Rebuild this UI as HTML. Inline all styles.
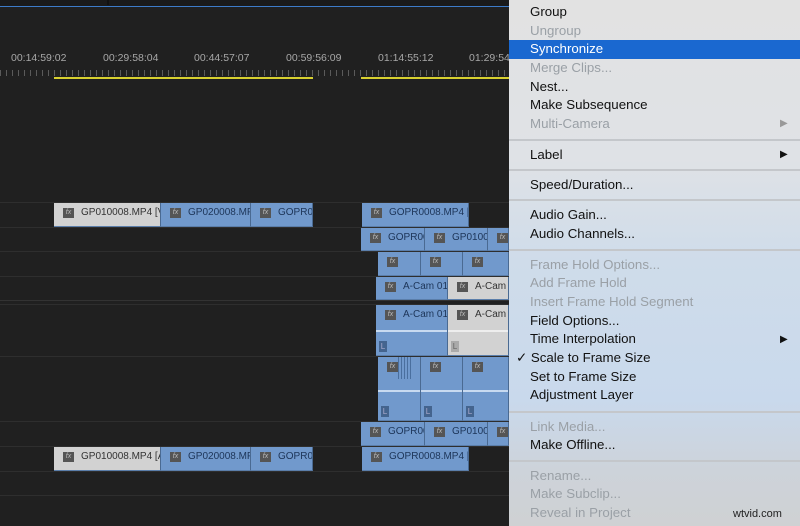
<!DOCTYPE html>
<html><head><meta charset="utf-8"><style>
*{margin:0;padding:0;box-sizing:border-box}
body{width:800px;height:526px;overflow:hidden;background:#202020;position:relative;font-family:"Liberation Sans",sans-serif}
.a{position:absolute}
.ln{position:absolute;left:0;width:509px;height:1px;background:#2e2e2e}
.c{position:absolute;background:#7199cc;border-right:1px solid #4a6a92;overflow:hidden;white-space:nowrap;font-size:10px;color:#1d3558;border-bottom:1px solid #5b7eaa}
.c.g{background:#d2d2d2;color:#333}
.fx{position:absolute;left:9px;top:5px;width:11px;height:10px;background:#555;color:#bbb;font-size:7px;font-style:italic;line-height:10px;text-align:center}
.c span{position:absolute;left:27px;top:4px}
.L{position:absolute;left:3px;bottom:3px;width:8px;height:11px;background:#44648e;color:#aac;font-size:8px;line-height:11px;text-align:center}
.hl{position:absolute;left:0;right:0;height:2px;background:#c8daf0}
.tc{position:absolute;top:52px;font-size:10.5px;color:#a8a8a8}
.menu{position:absolute;left:509px;top:0;width:291px;height:526px;background:linear-gradient(#e2e2e2 0,#dfe2e6 160px,#cfdcea 260px,#c9d9ec 400px,#cdd3da 470px,#cfd1d3 526px)}
.mi{position:absolute;left:21px;font-size:13.3px;color:#111;line-height:18px}
.d{color:#9aa0a6}
.sep{position:absolute;left:0;right:0;height:2px;background:#c4c7cb}
.arr{position:absolute;left:271px;font-size:10px;color:#111}
</style></head><body>
<div class="a" style="left:0;top:0;width:509px;height:6px;background:#1a1a1a"></div>
<div class="a" style="left:107px;top:0;width:2px;height:5px;background:#111"></div>
<div class="a" style="left:0;top:6px;width:509px;height:1px;background:#3d7bc8"></div>
<div class="tc" style="left:11px">00:14:59:02</div>
<div class="tc" style="left:103px">00:29:58:04</div>
<div class="tc" style="left:194px">00:44:57:07</div>
<div class="tc" style="left:286px">00:59:56:09</div>
<div class="tc" style="left:378px">01:14:55:12</div>
<div class="tc" style="left:469px">01:29:54</div>
<div class="a" style="left:0;top:70px;width:509px;height:6px;background:repeating-linear-gradient(90deg,#5a5a5a 0 1px,transparent 1px 6px)"></div>
<div class="a" style="left:54px;top:77px;width:259px;height:2px;background:#d8d030"></div>
<div class="a" style="left:361px;top:77px;width:148px;height:2px;background:#d8d030"></div>

<div class="ln" style="top:202px"></div><div class="ln" style="top:227px"></div>
<div class="ln" style="top:251px"></div><div class="ln" style="top:276px"></div>
<div class="ln" style="top:300px;background:#333"></div><div class="ln" style="top:304px"></div>
<div class="ln" style="top:356px"></div><div class="ln" style="top:421px"></div>
<div class="ln" style="top:446px"></div><div class="ln" style="top:471px"></div>
<div class="ln" style="top:495px"></div>

<div class="c g" style="left:54px;top:203px;width:107px;height:24px"><i class="fx">fx</i><span>GP010008.MP4 [V]</span></div>
<div class="c" style="left:161px;top:203px;width:90px;height:24px"><i class="fx">fx</i><span>GP020008.MP4</span></div>
<div class="c" style="left:251px;top:203px;width:62px;height:24px"><i class="fx">fx</i><span>GOPR00</span></div>
<div class="c" style="left:362px;top:203px;width:107px;height:24px"><i class="fx">fx</i><span>GOPR0008.MP4 [V]</span></div>
<div class="c" style="left:361px;top:228px;width:64px;height:23px"><i class="fx">fx</i><span>GOPR00</span></div>
<div class="c" style="left:425px;top:228px;width:63px;height:23px"><i class="fx">fx</i><span>GP0100</span></div>
<div class="c" style="left:488px;top:228px;width:21px;height:23px"><i class="fx">fx</i></div>
<div class="c" style="left:378px;top:252px;width:43px;height:24px"><i class="fx">fx</i></div>
<div class="c" style="left:421px;top:252px;width:42px;height:24px"><i class="fx">fx</i></div>
<div class="c" style="left:463px;top:252px;width:46px;height:24px"><i class="fx">fx</i></div>
<div class="c" style="left:376px;top:277px;width:72px;height:23px"><i class="fx">fx</i><span>A-Cam 01</span></div>
<div class="c g" style="left:448px;top:277px;width:61px;height:23px"><i class="fx">fx</i><span>A-Cam 0</span></div>
<div class="c" style="left:376px;top:305px;width:72px;height:51px"><i class="fx">fx</i><span>A-Cam 01</span><div class="hl" style="top:25px"></div><div class="L">L</div></div>
<div class="c g" style="left:448px;top:305px;width:61px;height:51px"><i class="fx">fx</i><span>A-Cam 0</span><div class="hl" style="top:25px;background:#eee"></div><div class="L" style="background:#aaa;color:#666">L</div></div>
<div class="c" style="left:378px;top:357px;width:43px;height:64px"><i class="fx">fx</i><div class="a" style="left:20px;top:0;width:14px;height:22px;background:repeating-linear-gradient(90deg,#4a6f9e 0 1px,transparent 1px 3px)"></div><div class="hl" style="top:33px"></div><div class="L">L</div></div>
<div class="c" style="left:421px;top:357px;width:42px;height:64px"><i class="fx">fx</i><div class="hl" style="top:33px"></div><div class="L">L</div></div>
<div class="c" style="left:463px;top:357px;width:46px;height:64px"><i class="fx">fx</i><div class="hl" style="top:33px"></div><div class="L">L</div></div>
<div class="c" style="left:361px;top:422px;width:64px;height:24px"><i class="fx">fx</i><span>GOPR00</span></div>
<div class="c" style="left:425px;top:422px;width:63px;height:24px"><i class="fx">fx</i><span>GP0100</span></div>
<div class="c" style="left:488px;top:422px;width:21px;height:24px"><i class="fx">fx</i></div>
<div class="c g" style="left:54px;top:447px;width:107px;height:24px"><i class="fx">fx</i><span>GP010008.MP4 [A]</span></div>
<div class="c" style="left:161px;top:447px;width:90px;height:24px"><i class="fx">fx</i><span>GP020008.MP4</span></div>
<div class="c" style="left:251px;top:447px;width:62px;height:24px"><i class="fx">fx</i><span>GOPR00</span></div>
<div class="c" style="left:362px;top:447px;width:107px;height:24px"><i class="fx">fx</i><span>GOPR0008.MP4 [A]</span></div>

<div class="menu">
<div class="a" style="left:0;top:40px;width:291px;height:19px;background:#1a68d0"></div>
<div class="mi" style="top:3px">Group</div>
<div class="mi d" style="top:22px">Ungroup</div>
<div class="mi" style="top:40px;color:#fff">Synchronize</div>
<div class="mi d" style="top:59px">Merge Clips...</div>
<div class="mi" style="top:78px">Nest...</div>
<div class="mi" style="top:96px">Make Subsequence</div>
<div class="mi d" style="top:115px">Multi-Camera</div><div class="arr" style="top:118px;color:#999">▶</div>
<div class="sep" style="top:139px"></div>
<div class="mi" style="top:146px">Label</div><div class="arr" style="top:149px">▶</div>
<div class="sep" style="top:169px"></div>
<div class="mi" style="top:176px">Speed/Duration...</div>
<div class="sep" style="top:199px"></div>
<div class="mi" style="top:206px">Audio Gain...</div>
<div class="mi" style="top:225px">Audio Channels...</div>
<div class="sep" style="top:249px"></div>
<div class="mi d" style="top:256px">Frame Hold Options...</div>
<div class="mi d" style="top:274px">Add Frame Hold</div>
<div class="mi d" style="top:293px">Insert Frame Hold Segment</div>
<div class="mi" style="top:312px">Field Options...</div>
<div class="mi" style="top:330px">Time Interpolation</div><div class="arr" style="top:334px">▶</div>
<div class="mi" style="top:349px;left:7px">✓ Scale to Frame Size</div>
<div class="mi" style="top:368px">Set to Frame Size</div>
<div class="mi" style="top:386px">Adjustment Layer</div>
<div class="sep" style="top:411px"></div>
<div class="mi d" style="top:418px">Link Media...</div>
<div class="mi" style="top:436px">Make Offline...</div>
<div class="sep" style="top:460px"></div>
<div class="mi d" style="top:467px">Rename...</div>
<div class="mi d" style="top:485px">Make Subclip...</div>
<div class="mi d" style="top:504px">Reveal in Project</div>
<div class="a" style="left:224px;top:508px;font-size:11px;color:#222">wtvid.com</div>
</div>
</body></html>
